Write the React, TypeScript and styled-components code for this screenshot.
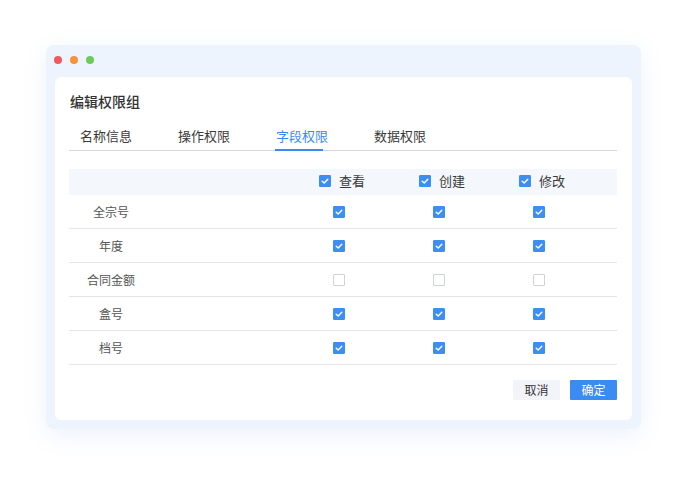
import React, { useState } from 'react';
import styled, { createGlobalStyle } from 'styled-components';

const GlobalStyle = createGlobalStyle`
  html, body {
    margin: 0;
    padding: 0;
    background: #ffffff;
    font-family: "Noto Sans CJK SC", "Noto Sans", sans-serif;
  }
`;

const Page = styled.div`
  width: 693px;
  height: 481px;
  padding: 45px 0 0 46px;
  box-sizing: border-box;
`;

// Light blue window shell with traffic-light dots
const Window = styled.div`
  width: 595px;
  height: 384px;
  background: #edf4fe;
  border-radius: 8px;
  box-shadow: 0 6px 24px rgba(70, 130, 220, 0.1);
  display: flex;
  flex-direction: column;
`;

const TitleBar = styled.div`
  height: 32px;
  display: flex;
  align-items: center;
  gap: 8px;
  padding-left: 8px;
  padding-bottom: 2px;
  box-sizing: border-box;
`;

const Dot = styled.span<{ $color: string }>`
  width: 8px;
  height: 8px;
  border-radius: 50%;
  background: ${(p) => p.$color};
`;

const Panel = styled.div`
  margin: 0 9px 9px;
  height: 343px;
  background: #ffffff;
  border-radius: 6px;
  padding: 14px 15px 20px 14px;
  box-sizing: border-box;
  display: flex;
  flex-direction: column;
`;

const Title = styled.h2`
  margin: 0;
  padding-left: 1px;
  font-size: 14px;
  line-height: 20px;
  font-weight: 500;
  color: #333333;
`;

const Tabs = styled.div`
  margin-top: 15px;
  display: flex;
  gap: 46px;
  padding-left: 11px;
  border-bottom: 1px solid #d6d8dd;
`;

const Tab = styled.div<{ $active?: boolean }>`
  position: relative;
  font-size: 13px;
  line-height: 20px;
  padding-bottom: 4px;
  width: 52px;
  white-space: nowrap;
  cursor: pointer;
  color: ${(p) => (p.$active ? '#3a8bf0' : '#3a3a3a')};

  &::after {
    content: '';
    display: ${(p) => (p.$active ? 'block' : 'none')};
    position: absolute;
    left: -1px;
    bottom: -1px;
    width: 48px;
    height: 2px;
    background: #3a8bf0;
  }
`;

const Table = styled.div`
  margin-top: 18px;
  display: flex;
  flex-direction: column;
`;

const Row = styled.div<{ $head?: boolean }>`
  display: grid;
  grid-template-columns: 84px 136px 100px 100px 100px 1fr;
  align-items: center;
  box-sizing: border-box;
  height: ${(p) => (p.$head ? '26px' : '34px')};
  background: ${(p) => (p.$head ? '#f4f8fd' : 'transparent')};
  border-bottom: ${(p) => (p.$head ? 'none' : '1px solid #e4e6ea')};
`;

const Label = styled.div`
  text-align: center;
  font-size: 12px;
  color: #555555;
  grid-column: 1;
`;

const HeadCell = styled.label`
  display: flex;
  align-items: center;
  gap: 8px;
  padding-left: 30px;
  padding-bottom: 2px;
  font-size: 13px;
  line-height: 18px;
  color: #3a3a3a;
  cursor: pointer;
`;

const Cell = styled.div`
  display: flex;
  justify-content: center;
  align-items: center;
`;

const Box = styled.span<{ $checked: boolean }>`
  width: 12px;
  height: 12px;
  box-sizing: border-box;
  border-radius: 1px;
  display: inline-flex;
  align-items: center;
  justify-content: center;
  cursor: pointer;
  background: ${(p) => (p.$checked ? '#3d8ef2' : '#ffffff')};
  border: 1px solid ${(p) => (p.$checked ? '#3d8ef2' : '#cfd2d8')};
`;

const Footer = styled.div`
  margin-top: 15px;
  display: flex;
  justify-content: flex-end;
  gap: 10px;
`;

const Button = styled.button<{ $primary?: boolean }>`
  width: 47px;
  height: 20px;
  border: none;
  border-radius: 1px;
  padding: 0 0 1px;
  font-family: inherit;
  font-size: 12px;
  cursor: pointer;
  background: ${(p) => (p.$primary ? '#3b8cf2' : '#f2f4f9')};
  color: ${(p) => (p.$primary ? '#ffffff' : '#333333')};
`;

const Checkbox = ({ checked, onClick }: { checked: boolean; onClick?: () => void }) => (
  <Box $checked={checked} onClick={onClick}>
    {checked && (
      <svg width="10" height="10" viewBox="0 0 10 10">
        <path d="M2.2 5.2 L4.2 7 L7.8 3.3" fill="none" stroke="#ffffff" strokeWidth="1.4" strokeLinecap="round" strokeLinejoin="round" />
      </svg>
    )}
  </Box>
);

const tabs = ['名称信息', '操作权限', '字段权限', '数据权限'];
const columns = ['查看', '创建', '修改'];
const initialRows = [
  { name: '全宗号', perms: [true, true, true] },
  { name: '年度', perms: [true, true, true] },
  { name: '合同金额', perms: [false, false, false] },
  { name: '盒号', perms: [true, true, true] },
  { name: '档号', perms: [true, true, true] },
];

export default function App() {
  const [active, setActive] = useState(2);
  const [rows, setRows] = useState(initialRows);

  const toggle = (r: number, c: number) =>
    setRows((prev) =>
      prev.map((row, i) =>
        i === r ? { ...row, perms: row.perms.map((v, j) => (j === c ? !v : v)) } : row
      )
    );

  return (
    <>
      <GlobalStyle />
      <Page>
        <Window>
          <TitleBar>
            <Dot $color="#ee5a5d" />
            <Dot $color="#f7913b" />
            <Dot $color="#6ccb5b" />
          </TitleBar>
          <Panel>
            <Title>编辑权限组</Title>
            <Tabs>
              {tabs.map((t, i) => (
                <Tab key={t} $active={i === active} onClick={() => setActive(i)}>
                  {t}
                </Tab>
              ))}
            </Tabs>
            <Table>
              <Row $head>
                <span />
                <span />
                {columns.map((c) => (
                  <HeadCell key={c}>
                    <Checkbox checked />
                    {c}
                  </HeadCell>
                ))}
              </Row>
              {rows.map((row, r) => (
                <Row key={row.name}>
                  <Label>{row.name}</Label>
                  <span />
                  {row.perms.map((v, c) => (
                    <Cell key={c}>
                      <Checkbox checked={v} onClick={() => toggle(r, c)} />
                    </Cell>
                  ))}
                </Row>
              ))}
            </Table>
            <Footer>
              <Button>取消</Button>
              <Button $primary>确定</Button>
            </Footer>
          </Panel>
        </Window>
      </Page>
    </>
  );
}
